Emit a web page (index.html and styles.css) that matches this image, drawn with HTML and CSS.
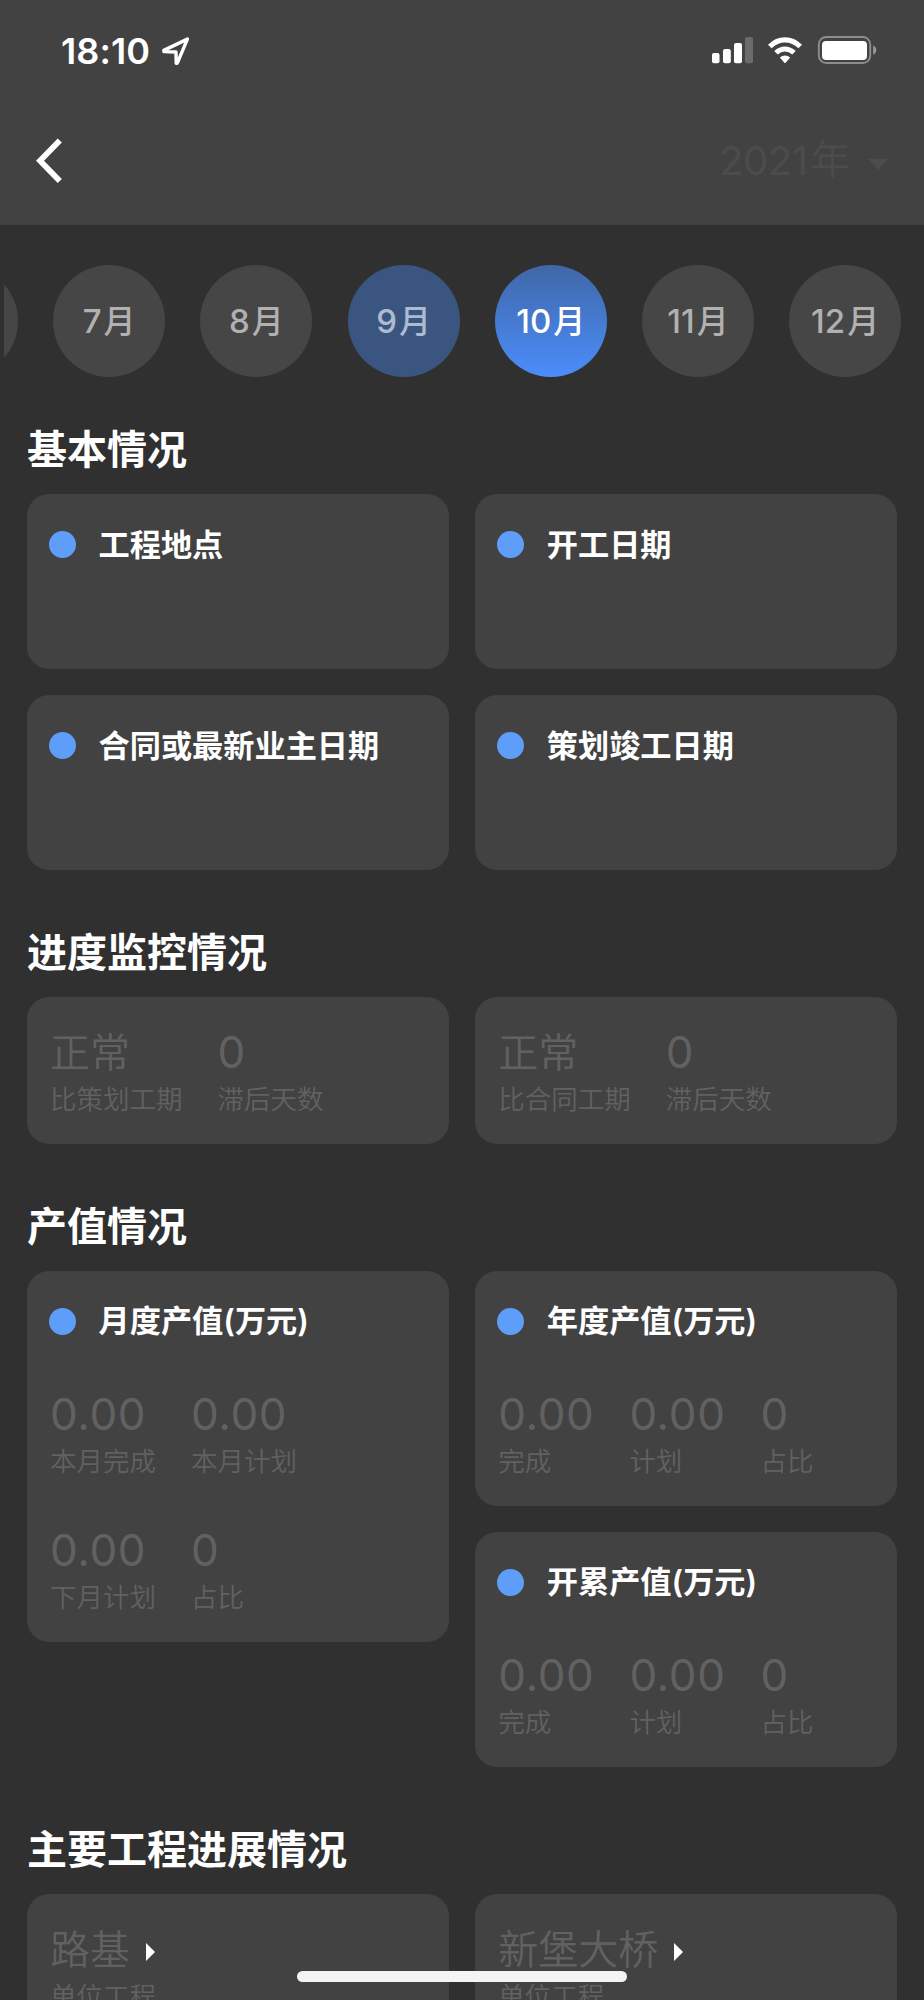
FILE: index.html
```html
<!DOCTYPE html>
<html lang="zh-CN">
<head>
    <meta charset="UTF-8">
    <meta name="viewport" content="width=device-width, initial-scale=1.0">
    <title>工程进度</title>
    <link rel="stylesheet" href="styles.css">
</head>
<body>

    <header class="header">
        <!-- Status bar -->
        <div class="status-bar">
            <span class="time">18:10</span>
            <svg class="location" width="32" height="32" viewBox="0 0 32 32">
                <path d="M3.8 15.4 L27.4 4.1 L17.3 28.2 L16.2 28.2 L16 17 L4 16.6 Z" fill="none" stroke="#fff" stroke-width="3.4" stroke-linejoin="round"/>
            </svg>
            <svg class="status-icons" width="168" height="32" viewBox="0 0 168 32">
                <rect x="2" y="18" width="7.5" height="10.3" rx="2" fill="#fff"/>
                <rect x="13" y="14" width="7.8" height="14.3" rx="2" fill="#fff"/>
                <rect x="24" y="8" width="8" height="20.3" rx="2" fill="#fff"/>
                <rect x="35" y="2" width="8" height="26.3" rx="2" fill="#6b6b6b"/>
                <path d="M59.8 11.5 C68.8 2.6 81.2 2.6 90.2 11.5" fill="none" stroke="#fff" stroke-width="5.2"/>
                <path d="M66 17.8 C71.4 12.6 78.6 12.6 84 17.8" fill="none" stroke="#fff" stroke-width="5"/>
                <path d="M69.8 22.4 Q75 18.4 80.2 22.4 L75.6 27.7 Q75 28.2 74.4 27.7 Z" fill="#fff"/>
                <rect x="108.8" y="2" width="51.4" height="26" rx="7.5" fill="none" stroke="#8d8d8d" stroke-width="1.9"/>
                <rect x="112" y="6" width="45" height="19" rx="4" fill="#fff"/>
                <path d="M163.2 10.4 Q166.3 12 166.3 15.1 Q166.3 18.2 163.2 19.8 Z" fill="#9a9a9a"/>
            </svg>
        </div>

        <!-- Nav bar -->
        <div class="nav-bar">
            <svg class="back" width="28" height="46" viewBox="0 0 28 46">
                <path d="M23.8 2.5 L4 22.7 L23.8 43" fill="none" stroke="#fff" stroke-width="5.8"/>
            </svg>
            <div class="year">
                <span>2021</span><span class="year-unit">年</span>
                <i class="arrow-down"></i>
            </div>
        </div>
    </header>

    <div class="months">
        <div class="month"></div>
        <div class="month">7<span>月</span></div>
        <div class="month">8<span>月</span></div>
        <div class="month current">9<span>月</span></div>
        <div class="month active">10<span>月</span></div>
        <div class="month">11<span>月</span></div>
        <div class="month">12<span>月</span></div>
    </div>

    <main class="container">
        <h2>基本情况</h2>
        <div class="grid">
            <div class="card info"><h3>工程地点</h3></div>
            <div class="card info"><h3>开工日期</h3></div>
            <div class="card info"><h3>合同或最新业主日期</h3></div>
            <div class="card info"><h3>策划竣工日期</h3></div>
        </div>

        <h2>进度监控情况</h2>
        <div class="grid">
            <div class="card">
                <div class="stats">
                    <div class="stat"><b class="text">正常</b><span>比策划工期</span></div>
                    <div class="stat"><b>0</b><span>滞后天数</span></div>
                </div>
            </div>
            <div class="card">
                <div class="stats">
                    <div class="stat"><b class="text">正常</b><span>比合同工期</span></div>
                    <div class="stat"><b>0</b><span>滞后天数</span></div>
                </div>
            </div>
        </div>

        <h2>产值情况</h2>
        <div class="grid">
            <div class="card">
                <h3>月度产值(万元)</h3>
                <div class="stats">
                    <div class="stat"><b>0.00</b><span>本月完成</span></div>
                    <div class="stat"><b>0.00</b><span>本月计划</span></div>
                </div>
                <div class="stats">
                    <div class="stat"><b>0.00</b><span>下月计划</span></div>
                    <div class="stat"><b>0</b><span>占比</span></div>
                </div>
            </div>
            <div class="column">
                <div class="card">
                    <h3>年度产值(万元)</h3>
                    <div class="stats">
                        <div class="stat"><b>0.00</b><span>完成</span></div>
                        <div class="stat"><b>0.00</b><span>计划</span></div>
                        <div class="stat"><b>0</b><span>占比</span></div>
                    </div>
                </div>
                <div class="card">
                    <h3>开累产值(万元)</h3>
                    <div class="stats">
                        <div class="stat"><b>0.00</b><span>完成</span></div>
                        <div class="stat"><b>0.00</b><span>计划</span></div>
                        <div class="stat"><b>0</b><span>占比</span></div>
                    </div>
                </div>
            </div>
        </div>

        <h2>主要工程进展情况</h2>
        <div class="grid">
            <div class="card">
                <div class="stat"><b class="text link">路基</b><span>单位工程</span></div>
            </div>
            <div class="card">
                <div class="stat"><b class="text link">新堡大桥</b><span>单位工程</span></div>
            </div>
        </div>
    </main>

    <div class="home-indicator"></div>

</body>
</html>
```
FILE: styles.css
```css
* {
    margin: 0;
    padding: 0;
    box-sizing: border-box;
}

body {
    width: 924px;
    height: 2000px;
    overflow: hidden;
    background-color: #303030;
    color: #fff;
    font-family: Inter, "Noto Sans CJK SC", sans-serif;
}

/* Header */
.header {
    height: 224.5px;
    background-color: #424242;
}

.status-bar {
    display: flex;
    align-items: center;
    height: 102px;
    padding: 0 46px 0 61px;
}

.time {
    width: 99px;
    font-size: 36px;
    font-weight: 600;
    letter-spacing: 0.1px;
}

.status-icons {
    margin-left: auto;
}

.nav-bar {
    display: flex;
    align-items: center;
    justify-content: space-between;
    height: 118px;
    padding: 0 36px 0 36px;
}

.year {
    display: flex;
    align-items: center;
    color: #4c4c4c;
    font-size: 40px;
    line-height: 48px;
    letter-spacing: -0.5px;
}

.year span {
    margin-top: -1px;
}

.year .year-unit {
    margin: -2px 0 0 3px;
    font-weight: 350;
}

.arrow-down {
    margin: 6px 0 0 18px;
    border: 10.5px solid transparent;
    border-top: 11px solid #4c4c4c;
    border-bottom: 0;
}

/* Month selector */
.months {
    display: flex;
    gap: 35.2px;
    margin: 40px 0 0 4px;
    overflow: hidden;
}

.month {
    flex: none;
    display: flex;
    align-items: center;
    justify-content: center;
    width: 112px;
    height: 112px;
    border-radius: 50%;
    background-color: #464646;
    color: #b1b1b1;
    font-size: 33px;
    font-weight: 500;
    line-height: 40px;
}

.month:first-child {
    margin-left: -98px;
}

.month span {
    margin: 2px 0 0 2px;
    font-size: 32px;
}

.month.current {
    background-color: #3a5680;
    color: #adbbd1;
}

.month.active {
    background: linear-gradient(#4067a7, #4b8dfb);
    color: #fff;
}

/* Sections */
.container {
    padding: 43.4px 27px 0;
}

h2 {
    margin-bottom: 14.4px;
    font-size: 40px;
    font-weight: 600;
    line-height: 60px;
}

.grid {
    display: grid;
    grid-template-columns: 1fr 1fr;
    gap: 26.5px;
    align-items: start;
    margin-bottom: 53px;
}

.column {
    display: grid;
    gap: 26.5px;
}

.card {
    padding: 30px 23px 26.5px;
    border-radius: 22px;
    background-color: #424242;
}

.card.info {
    height: 174.4px;
}

h3 {
    display: flex;
    align-items: center;
    margin-left: -1px;
    font-size: 31.2px;
    font-weight: 600;
    line-height: 40px;
    white-space: nowrap;
}

h3::before {
    content: "";
    width: 27px;
    height: 27px;
    margin-right: 22.5px;
    border-radius: 50%;
    background-color: #5e9ef8;
}

.info h3 {
    margin-top: 0.5px;
}

/* Numbers with a caption below */
.stats {
    display: flex;
    gap: 35px;
}

h3 + .stats {
    margin-top: 47.5px;
}

.stats + .stats {
    margin-top: 45.5px;
}

.stat {
    color: #616161;
}

.stat b {
    display: flex;
    align-items: center;
    height: 52px;
    padding-bottom: 1px;
    font-size: 44px;
    font-weight: 400;
    letter-spacing: 0.6px;
}

.stat b.text {
    padding-bottom: 6px;
    font-size: 40px;
    font-weight: 350;
    letter-spacing: 0;
}

.stat span {
    display: block;
    margin-top: 2px;
    font-size: 26.5px;
    font-weight: 350;
    line-height: 36.5px;
}

.link::after {
    content: "";
    margin: 9px 0 0 16px;
    border: 9px solid transparent;
    border-left-color: #fff;
    border-right: 0;
}

.home-indicator {
    position: absolute;
    left: 297px;
    top: 1971px;
    width: 330px;
    height: 11px;
    border-radius: 6px;
    background-color: #f4f4f4;
}
```
